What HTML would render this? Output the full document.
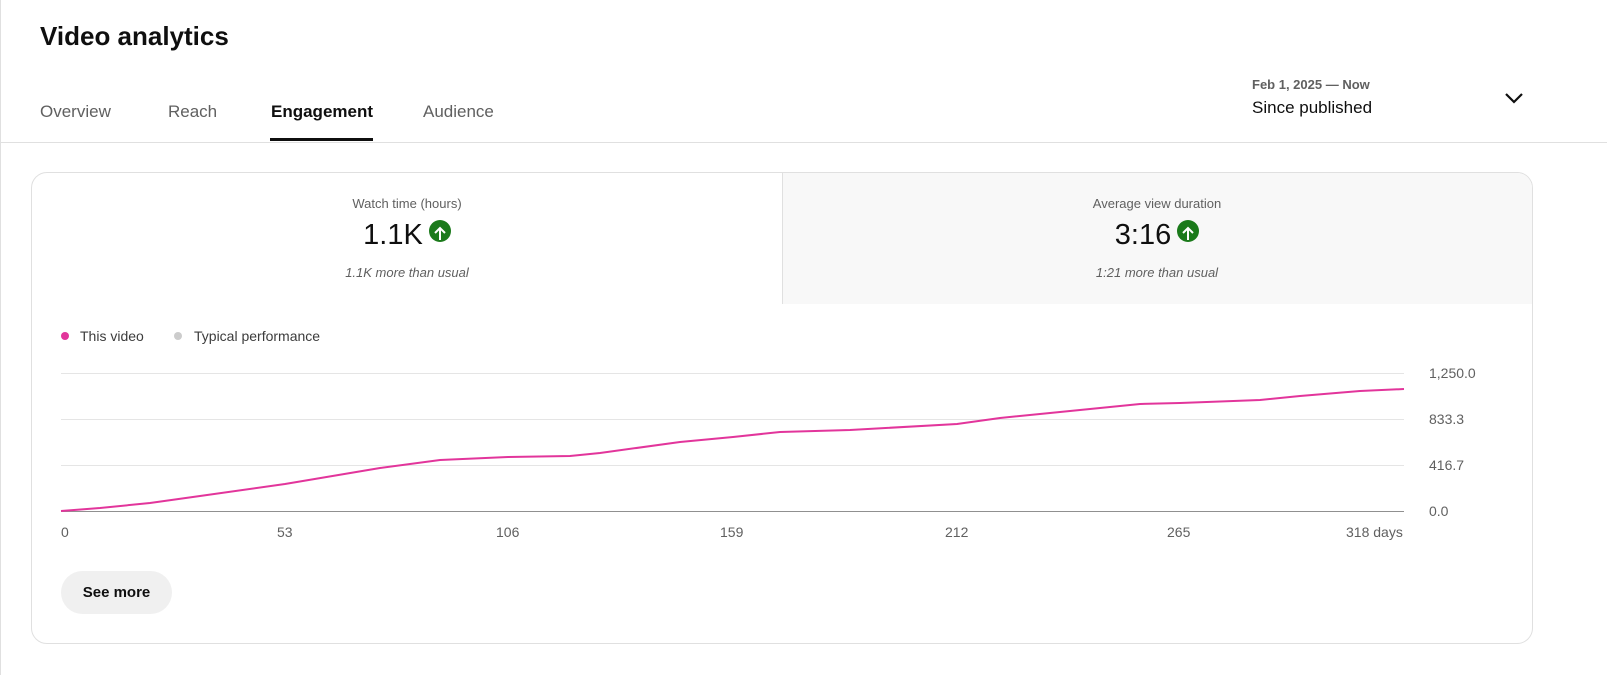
<!DOCTYPE html>
<html><head><meta charset="utf-8"><style>
body{margin:0;width:1607px;height:675px;background:#fff;font-family:"Liberation Sans",sans-serif;position:relative;overflow:hidden;color:#0f0f0f}
.a{position:absolute}
.tab{position:absolute;top:102px;font-size:17px;color:#606060}
.card{position:absolute;left:31px;top:172px;width:1500px;height:470px;border:1px solid #e0e0e0;border-radius:16px;overflow:hidden}
.lbl{font-size:13px;color:#606060;text-align:center;position:absolute;width:100%}
.up{display:inline-block;width:22px;height:22px;border-radius:50%;background:#1b7a1b;vertical-align:-1px;margin-left:6px}
.ax{position:absolute;top:524px;font-size:14px;color:#606060}
.yl{position:absolute;left:1429px;font-size:14px;color:#606060}
</style></head><body>
<div class="a" style="left:0;top:0;width:1px;height:675px;background:#e0e0e0"></div>
<div class="a" style="left:40px;top:21px;font-size:26px;font-weight:bold">Video analytics</div>
<div class="tab" style="left:40px">Overview</div>
<div class="tab" style="left:168px">Reach</div>
<div class="tab" style="left:271px;color:#0f0f0f;font-weight:bold">Engagement</div>
<div class="a" style="left:270px;top:138px;width:103px;height:3px;background:#0f0f0f"></div>
<div class="tab" style="left:423px">Audience</div>
<div class="a" style="left:1252px;top:77px;font-size:13px;color:#606060;font-weight:bold">Feb 1, 2025 — Now</div>
<div class="a" style="left:1252px;top:98px;font-size:17px">Since published</div>
<svg class="a" style="left:1503px;top:88px" width="22" height="20"><path d="M3 6l8 8 8-8" stroke="#0f0f0f" stroke-width="2.2" fill="none"/></svg>
<div class="a" style="left:0;top:142px;width:1607px;height:1px;background:#e0e0e0"></div>
<div class="card">
 <div class="a" style="left:750px;top:0;width:750px;height:131px;background:#f8f8f8;border-left:1px solid #e0e0e0"></div>
 <div class="a" style="left:0;top:0;width:750px;height:131px">
  <div class="lbl" style="top:23px">Watch time (hours)</div>
  <div class="lbl" style="top:46px;font-size:29px;color:#0f0f0f">1.1K<span class="up"><svg width="22" height="22"><path d="M11 17V6M6 10l5-5 5 5" stroke="#fff" stroke-width="2" fill="none"/></svg></span></div>
  <div class="lbl" style="top:92px;font-style:italic;font-size:13px">1.1K more than usual</div>
 </div>
 <div class="a" style="left:750px;top:0;width:750px;height:131px">
  <div class="lbl" style="top:23px">Average view duration</div>
  <div class="lbl" style="top:46px;font-size:29px;color:#0f0f0f">3:16<span class="up"><svg width="22" height="22"><path d="M11 17V6M6 10l5-5 5 5" stroke="#fff" stroke-width="2" fill="none"/></svg></span></div>
  <div class="lbl" style="top:92px;font-style:italic;font-size:13px">1:21 more than usual</div>
 </div>
</div>
<div class="a" style="left:61px;top:332px;width:8px;height:8px;border-radius:50%;background:#e2359b"></div>
<div class="a" style="left:80px;top:328px;font-size:14px;color:#3c3c3c">This video</div>
<div class="a" style="left:174px;top:332px;width:8px;height:8px;border-radius:50%;background:#ccc"></div>
<div class="a" style="left:194px;top:328px;font-size:14px;color:#3c3c3c">Typical performance</div>
<svg class="a" style="left:0;top:0" width="1607" height="675">
<g stroke="#e5e5e5"><line x1="61" y1="373.5" x2="1404" y2="373.5"/><line x1="61" y1="419.5" x2="1404" y2="419.5"/><line x1="61" y1="465.5" x2="1404" y2="465.5"/></g>
<line x1="61" y1="511.5" x2="1404" y2="511.5" stroke="#909090"/>
<polyline fill="none" stroke="#e2359b" stroke-width="2" points="61,511 100,508 150,503 200,496 285,484 380,468 440,460 508,457 570,456 600,453 680,442 733,437 780,432 850,430 957,424 1000,418 1050,413 1090,409 1140,404 1180,403 1260,400 1300,396 1360,391 1404,389"/>
</svg>
<div class="yl" style="top:365px">1,250.0</div>
<div class="yl" style="top:411px">833.3</div>
<div class="yl" style="top:457px">416.7</div>
<div class="yl" style="top:503px">0.0</div>
<div class="ax" style="left:61px">0</div>
<div class="ax" style="left:277px">53</div>
<div class="ax" style="left:496px">106</div>
<div class="ax" style="left:720px">159</div>
<div class="ax" style="left:945px">212</div>
<div class="ax" style="left:1167px">265</div>
<div class="ax" style="left:1346px">318 days</div>
<div class="a" style="left:61px;top:571px;width:111px;height:43px;border-radius:22px;background:#f0f0f0;font-size:15px;font-weight:bold;line-height:43px;text-align:center">See more</div>
</body></html>
